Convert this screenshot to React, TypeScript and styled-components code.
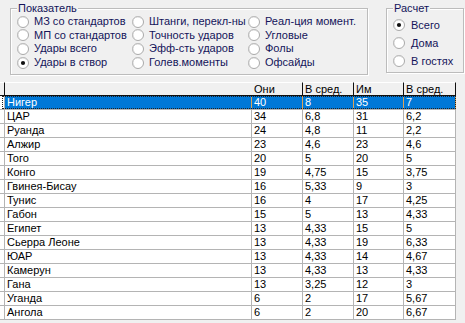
import React from "react";
import styled, { createGlobalStyle } from "styled-components";

const GlobalStyle = createGlobalStyle`
  html, body { margin: 0; padding: 0; background: #f0f0f0; }
  body { font-family: "Liberation Sans", Arial, sans-serif; font-size: 11px; }
  * { box-sizing: border-box; }
`;

const Page = styled.div`
  width: 465px;
  height: 323px;
  overflow: hidden;
  background: #f0f0f0;
`;

const TopBar = styled.div`
  display: flex;
  align-items: flex-start;
  height: 82px;
`;

const GroupBox = styled.div<{ $left: number; $width: number; $height: number }>`
  position: relative;
  margin-top: 8px;
  margin-left: ${(p) => p.$left}px;
  width: ${(p) => p.$width}px;
  height: ${(p) => p.$height}px;
  border: 1px solid #bcbcbc;
  box-shadow: inset 1px 1px 0 #ffffff, 1px 1px 0 #ffffff;
`;

const Caption = styled.span`
  position: absolute;
  top: -7px;
  left: 6px;
  padding: 0 1px;
  background: #f0f0f0;
  color: #14145a;
  line-height: 13px;
  white-space: nowrap;
`;

const RadioGrid = styled.div<{ $cols: string; $rows: number; $rowH: number; $pt: number; $pl: number }>`
  display: grid;
  grid-template-columns: ${(p) => p.$cols};
  grid-template-rows: repeat(${(p) => p.$rows}, ${(p) => p.$rowH}px);
  grid-auto-flow: column;
  padding-top: ${(p) => p.$pt}px;
  padding-left: ${(p) => p.$pl}px;
`;

const RadioItem = styled.div<{ $gap: number }>`
  display: flex;
  align-items: center;
  gap: ${(p) => p.$gap}px;
  color: #14145a;
  white-space: nowrap;
  line-height: 13px;
`;

const RadioIcon = ({ checked }: { checked?: boolean }) => (
  <svg width="12" height="12" viewBox="0 0 12 12" style={{ flex: "none" }}>
    <circle cx="6" cy="6" r="5.5" fill="#ffffff" stroke="#a8a8a8" strokeWidth="1" />
    <path d="M2.3 9.2 A4.6 4.6 0 0 1 9.2 2.3" fill="none" stroke="#d0d0d0" strokeWidth="1" />
    {checked && <circle cx="6" cy="6" r="2.1" fill="#111111" />}
  </svg>
);

const Radio = ({ label, checked, gap }: { label: string; checked?: boolean; gap: number }) => (
  <RadioItem $gap={gap}>
    <RadioIcon checked={checked} />
    <span>{label}</span>
  </RadioItem>
);

const Table = styled.div`
  display: flex;
  flex-direction: column;
  width: 456px;
`;

const Row = styled.div<{ $selected?: boolean }>`
  position: relative;
  display: flex;
  height: 14px;
  ${(p) =>
    p.$selected &&
    `
    &::after {
      content: "";
      position: absolute;
      left: 2px;
      right: 0;
      top: 0;
      bottom: 1px;
      border: 1px dotted #202020;
      pointer-events: none;
    }
  `}
`;

const HeadCell = styled.div<{ $w: number }>`
  width: ${(p) => p.$w}px;
  height: 14px;
  background: #f0f0f0;
  border-top: 1px solid #ffffff;
  border-right: 1px solid #101010;
  border-bottom: 1px solid #101010;
  padding-left: 2px;
  line-height: 12px;
  color: #000;
  white-space: nowrap;
  overflow: hidden;
`;

const HeadBlank = styled.div<{ $w: number }>`
  width: ${(p) => p.$w}px;
  height: 14px;
  background: #f0f0f0;
  border-top: 1px solid #ffffff;
  border-bottom: 1px solid #101010;
`;

const Indicator = styled.div<{ $head?: boolean }>`
  width: 5px;
  height: 14px;
  background: ${(p) => (p.$head ? "#f0f0f0" : "#ffffff")};
  border-right: 1px solid ${(p) => (p.$head ? "#101010" : "#b4b4b4")};
  border-bottom: 1px solid ${(p) => (p.$head ? "#101010" : "#b4b4b4")};
  border-top: ${(p) => (p.$head ? "1px solid #ffffff" : "none")};
`;

const Cell = styled.div<{ $w: number; $selected?: boolean }>`
  width: ${(p) => p.$w}px;
  height: 14px;
  padding-left: 2px;
  line-height: 13px;
  white-space: nowrap;
  overflow: hidden;
  background: ${(p) => (p.$selected ? "#0078d7" : "#ffffff")};
  color: ${(p) => (p.$selected ? "#ffffff" : "#000000")};
  border-right: 1px solid ${(p) => (p.$selected ? "#d9a45a" : "#b4b4b4")};
  border-bottom: 1px solid #b4b4b4;
`;

const widths = [247, 51, 51, 50, 52];

const data: [string, string, string, string, string][] = [
  ["Нигер", "40", "8", "35", "7"],
  ["ЦАР", "34", "6,8", "31", "6,2"],
  ["Руанда", "24", "4,8", "11", "2,2"],
  ["Алжир", "23", "4,6", "23", "4,6"],
  ["Того", "20", "5", "20", "5"],
  ["Конго", "19", "4,75", "15", "3,75"],
  ["Гвинея-Бисау", "16", "5,33", "9", "3"],
  ["Тунис", "16", "4", "17", "4,25"],
  ["Габон", "15", "5", "13", "4,33"],
  ["Египет", "13", "4,33", "15", "5"],
  ["Сьерра Леоне", "13", "4,33", "19", "6,33"],
  ["ЮАР", "13", "4,33", "14", "4,67"],
  ["Камерун", "13", "4,33", "13", "4,33"],
  ["Гана", "13", "3,25", "12", "3"],
  ["Уганда", "6", "2", "17", "5,67"],
  ["Ангола", "6", "2", "20", "6,67"],
];

const indicators = [
  "МЗ со стандартов",
  "МП со стандартов",
  "Удары всего",
  "Удары в створ",
  "Штанги, перекл-ны",
  "Точность ударов",
  "Эфф-сть ударов",
  "Голев.моменты",
  "Реал-ция момент.",
  "Угловые",
  "Фолы",
  "Офсайды",
];

const modes = ["Всего", "Дома", "В гостях"];

export default function App() {
  return (
    <Page>
      <GlobalStyle />
      <TopBar>
        <GroupBox $left={10} $width={358} $height={67}>
          <Caption>Показатель</Caption>
          <RadioGrid $cols="115px 116px auto" $rows={4} $rowH={13.6} $pt={6} $pl={6}>
            {indicators.map((l, i) => (
              <Radio key={l} label={l} checked={i === 3} gap={5} />
            ))}
          </RadioGrid>
        </GroupBox>
        <GroupBox $left={18} $width={78} $height={65}>
          <Caption>Расчет</Caption>
          <RadioGrid $cols="auto" $rows={3} $rowH={18} $pt={7} $pl={6}>
            {modes.map((l, i) => (
              <Radio key={l} label={l} checked={i === 0} gap={6} />
            ))}
          </RadioGrid>
        </GroupBox>
      </TopBar>
      <Table>
        <Row>
          <Indicator $head />
          <HeadBlank $w={widths[0]} />
          <HeadCell $w={widths[1]}>Они</HeadCell>
          <HeadCell $w={widths[2]}>В сред.</HeadCell>
          <HeadCell $w={widths[3]}>Им</HeadCell>
          <HeadCell $w={widths[4]}>В сред.</HeadCell>
        </Row>
        {data.map((r, i) => (
          <Row key={r[0]} $selected={i === 0}>
            <Indicator />
            {r.map((v, j) => (
              <Cell key={j} $w={widths[j]} $selected={i === 0}>
                {v}
              </Cell>
            ))}
          </Row>
        ))}
      </Table>
    </Page>
  );
}
